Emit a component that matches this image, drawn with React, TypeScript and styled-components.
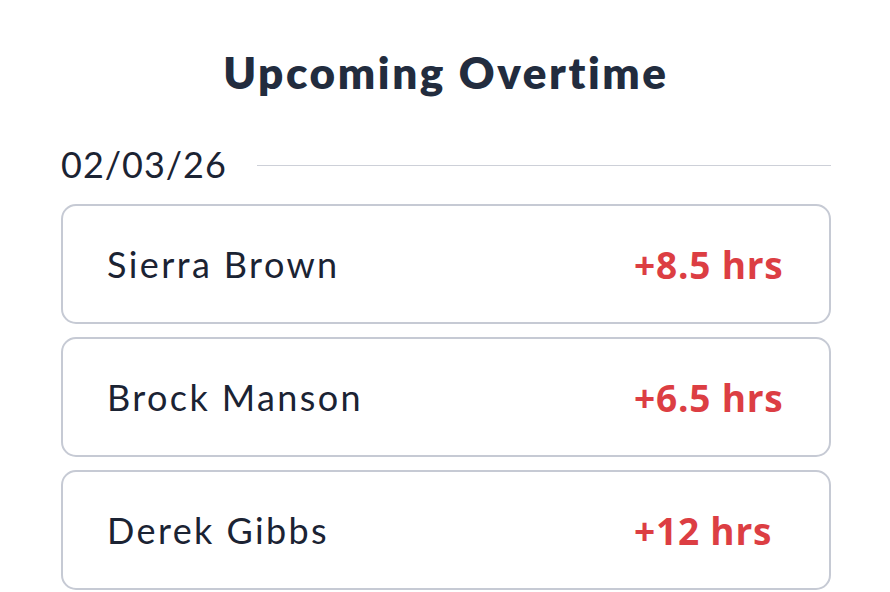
import React from "react";
import styled, { createGlobalStyle } from "styled-components";

const Global = createGlobalStyle`
  html, body { margin: 0; padding: 0; background: #ffffff; }
  body { font-family: "Lato", "Noto Sans", sans-serif; }
`;

const Page = styled.div`
  width: 890px;
  height: 592px;
  overflow: hidden;
  box-sizing: border-box;
  padding: 46px 59px 0 61px;
  display: flex;
  flex-direction: column;
`;

const Title = styled.h1`
  margin: 0;
  text-align: center;
  font-family: "Lato", sans-serif;
  font-weight: 800;
  font-size: 44px;
  line-height: 52px;
  color: #222c3e;
  letter-spacing: 2.6px;
`;

const DateRow = styled.div`
  margin-top: 44px;
  display: flex;
  align-items: center;
  gap: 30px;
  height: 44px;
`;

const DateLabel = styled.span`
  font-family: "Lato", sans-serif;
  font-size: 36px;
  color: #1b2333;
  letter-spacing: 1px;
`;

const Rule = styled.div`
  flex: 1;
  height: 1px;
  background: #cdd0d8;
  margin-top: 2px;
`;

const List = styled.div`
  margin-top: 18px;
  display: flex;
  flex-direction: column;
  gap: 13px;
`;

const Card = styled.div`
  box-sizing: border-box;
  height: 120px;
  border: 2px solid #c6cad4;
  border-radius: 15px;
  display: flex;
  align-items: center;
  padding: 0 0 0 44px;
`;

const Name = styled.span`
  flex: 1;
  font-family: "Lato", sans-serif;
  font-size: 36px;
  color: #1b2333;
  letter-spacing: 2.4px;
`;

const Hours = styled.span`
  width: 195px;
  font-family: "Open Sans", sans-serif;
  font-weight: 700;
  font-size: 37px;
  color: #dc3e43;
  letter-spacing: 0.8px;
`;

const rows = [
  { name: "Sierra Brown", hours: "+8.5 hrs" },
  { name: "Brock Manson", hours: "+6.5 hrs" },
  { name: "Derek Gibbs", hours: "+12 hrs" },
];

export default function App() {
  return (
    <>
      <Global />
      <Page>
        <Title>Upcoming Overtime</Title>
        <DateRow>
          <DateLabel>02/03/26</DateLabel>
          <Rule />
        </DateRow>
        <List>
          {rows.map((r) => (
            <Card key={r.name}>
              <Name>{r.name}</Name>
              <Hours>{r.hours}</Hours>
            </Card>
          ))}
        </List>
      </Page>
    </>
  );
}
